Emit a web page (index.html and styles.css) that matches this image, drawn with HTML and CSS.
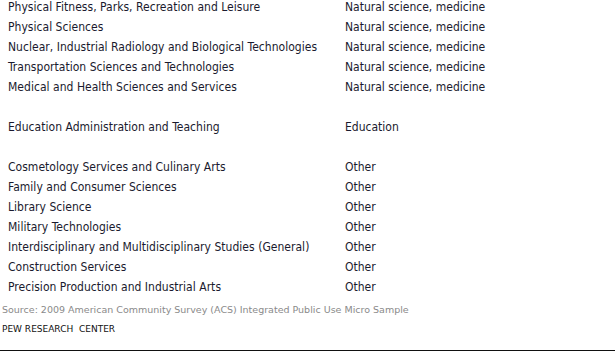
FILE: index.html
```html
<!DOCTYPE html>
<html>
<head>
<meta charset="utf-8">
<link rel="stylesheet" href="styles.css">
</head>
<body>
<div class="page">
  <div class="table">
    <div class="row"><span class="c1">Physical Fitness, Parks, Recreation and Leisure</span><span class="c2">Natural science, medicine</span></div>
    <div class="row"><span class="c1">Physical Sciences</span><span class="c2">Natural science, medicine</span></div>
    <div class="row"><span class="c1">Nuclear, Industrial Radiology and Biological Technologies</span><span class="c2">Natural science, medicine</span></div>
    <div class="row"><span class="c1">Transportation Sciences and Technologies</span><span class="c2">Natural science, medicine</span></div>
    <div class="row"><span class="c1">Medical and Health Sciences and Services</span><span class="c2">Natural science, medicine</span></div>
    <div class="row"></div>
    <div class="row"><span class="c1">Education Administration and Teaching</span><span class="c2">Education</span></div>
    <div class="row"></div>
    <div class="row"><span class="c1">Cosmetology Services and Culinary Arts</span><span class="c2">Other</span></div>
    <div class="row"><span class="c1">Family and Consumer Sciences</span><span class="c2">Other</span></div>
    <div class="row"><span class="c1">Library Science</span><span class="c2">Other</span></div>
    <div class="row"><span class="c1">Military Technologies</span><span class="c2">Other</span></div>
    <div class="row"><span class="c1">Interdisciplinary and Multidisciplinary Studies (General)</span><span class="c2">Other</span></div>
    <div class="row"><span class="c1">Construction Services</span><span class="c2">Other</span></div>
    <div class="row"><span class="c1">Precision Production and Industrial Arts</span><span class="c2">Other</span></div>
  </div>
  <div class="source">Source: 2009 American Community Survey (ACS) Integrated Public Use Micro Sample</div>
  <div class="credit">PEW RESEARCH &nbsp;CENTER</div>
  <div class="rule"></div>
</div>
</body>
</html>
```

FILE: styles.css
```css
html, body {
  margin: 0;
  padding: 0;
  background: #fff;
}
.page {
  width: 616px;
  height: 351px;
  overflow: hidden;
  font-family: "DejaVu Sans Condensed", "DejaVu Sans", sans-serif;
}
.table {
  margin-top: -3px;
  display: flex;
  flex-direction: column;
}
.row {
  display: grid;
  grid-template-columns: 345px 1fr;
  height: 20px;
  line-height: 20px;
  font-size: 12px;
  color: #1a1a2e;
}
.c1 {
  padding-left: 8px;
  white-space: nowrap;
  letter-spacing: 0.03px;
}
.source {
  margin-top: 6px;
  padding-left: 2px;
  font-family: "DejaVu Sans", sans-serif;
  font-size: 9.5px;
  line-height: 14px;
  color: #8a8a8a;
  white-space: nowrap;
}
.credit {
  margin-top: 6px;
  padding-left: 2px;
  font-family: "DejaVu Sans", sans-serif;
  font-size: 9px;
  line-height: 12px;
  color: #111;
  white-space: nowrap;
}
.rule {
  margin-top: 15px;
  margin-right: 1px;
  height: 1px;
  background: #111;
}
```
